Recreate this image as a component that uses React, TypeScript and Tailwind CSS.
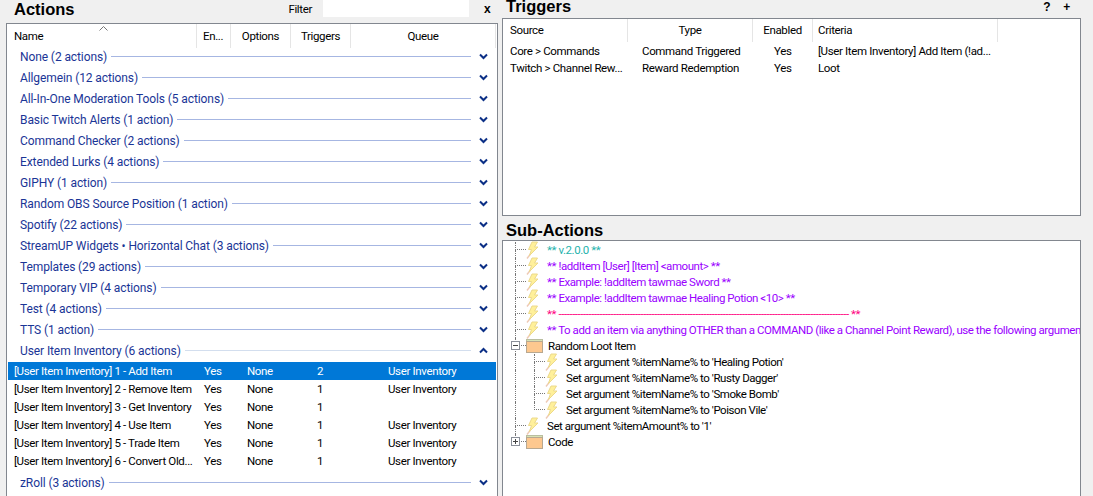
const groupsTop = [
  'None (2 actions)',
  'Allgemein (12 actions)',
  'All-In-One Moderation Tools (5 actions)',
  'Basic Twitch Alerts (1 action)',
  'Command Checker (2 actions)',
  'Extended Lurks (4 actions)',
  'GIPHY (1 action)',
  'Random OBS Source Position (1 action)',
  'Spotify (22 actions)',
  'StreamUP Widgets • Horizontal Chat (3 actions)',
  'Templates (29 actions)',
  'Temporary VIP (4 actions)',
  'Test (4 actions)',
  'TTS (1 action)',
]

const actions = [
  { name: '[User Item Inventory] 1 - Add Item', triggers: '2', queue: 'User Inventory', selected: true },
  { name: '[User Item Inventory] 2 - Remove Item', triggers: '1', queue: 'User Inventory' },
  { name: '[User Item Inventory] 3 - Get Inventory', triggers: '1', queue: '' },
  { name: '[User Item Inventory] 4 - Use Item', triggers: '1', queue: 'User Inventory' },
  { name: '[User Item Inventory] 5 - Trade Item', triggers: '1', queue: 'User Inventory' },
  { name: '[User Item Inventory] 6 - Convert Old...', triggers: '1', queue: 'User Inventory' },
]

const subActions = [
  { text: '** v.2.0.0 **', color: 'text-[#1fb3ad]' },
  { text: '** !addItem [User] [Item] <amount> **', color: 'text-[#9a00ff]' },
  { text: '** Example: !addItem tawmae Sword **', color: 'text-[#9a00ff]' },
  { text: '** Example: !addItem tawmae Healing Potion <10> **', color: 'text-[#9a00ff]' },
  { text: '** ' + '-'.repeat(106) + ' **', color: 'text-[#ff0080]' },
  {
    text: '** To add an item via anything OTHER  than a COMMAND (like a Channel Point Reward), use the following argument **',
    color: 'text-[#9a00ff]',
  },
]

const lootItems = ['Healing Potion', 'Rusty Dagger', 'Smoke Bomb', 'Poison Vile']

function Chevron({ up }: { up?: boolean }) {
  return (
    <svg width="9" height="7" viewBox="0 0 9 7" className="shrink-0">
      <polyline
        points={up ? '1,5.5 4.5,2 8,5.5' : '1,1.5 4.5,5 8,1.5'}
        fill="none"
        stroke="#0b2f86"
        strokeWidth="2"
      />
    </svg>
  )
}

function GroupRow({ label, open }: { label: string; open?: boolean }) {
  return (
    <div className="flex h-[21px] items-center pl-[13px] pr-[9px]">
      <span className="whitespace-nowrap text-[12px] tracking-[-0.1px] text-[#1a3596]">{label}</span>
      <div className={`ml-[4px] h-px flex-1 ${open ? 'bg-[#d3deee]' : 'bg-[#a6b6e2]'}`} />
      <div className="flex w-[17px] justify-end">
        <Chevron up={open} />
      </div>
    </div>
  )
}

function Bolt() {
  return (
    <svg width="13" height="18" viewBox="0 0 13 18" className="shrink-0">
      <path d="M4.5 13 L1 17.5" stroke="#eec9b4" strokeWidth="1.4" />
      <path d="M6 1 H11.5 L8.5 6 H12 L3.5 14.5 L5.5 8.5 H2.5 Z" fill="#fff09a" stroke="#ecd98c" strokeWidth="1" />
    </svg>
  )
}

function Folder() {
  return (
    <svg width="17" height="14" viewBox="0 0 17 14" className="shrink-0">
      <rect x="0.5" y="0.5" width="16" height="2" fill="#d8e2b4" stroke="#b9bea0" />
      <rect x="0.5" y="2.5" width="16" height="11" fill="#fdc88f" stroke="#b8a890" />
    </svg>
  )
}

function Expander({ open }: { open?: boolean }) {
  return (
    <span className="absolute left-[-4px] top-[3px] flex h-[9px] w-[9px] items-center justify-center border border-[#8a8f99] bg-white">
      <span className="relative h-px w-[5px] bg-[#444]">
        {!open && <span className="absolute left-[2px] top-[-2px] h-[5px] w-px bg-[#444]" />}
      </span>
    </span>
  )
}

// tree connector: vertical dotted stem plus a dotted branch at mid height
function Branch({ last, children }: { last?: boolean; children?: React.ReactNode }) {
  return (
    <div className="relative flex h-full w-[11px] shrink-0 flex-col">
      <div className="h-[8px] border-b border-l border-dotted border-[#777]" />
      {!last && <div className="h-[8px] border-l border-dotted border-[#777]" />}
      {children}
    </div>
  )
}

function Stem({ width }: { width: string }) {
  return <div className={`h-full shrink-0 border-l border-dotted border-[#777] ${width}`} />
}

function Title({ children }: { children: string }) {
  return (
    <h2 className="font-['Liberation_Sans',Arial,sans-serif] text-[16.5px] leading-[18px] font-bold tracking-normal text-black">
      {children}
    </h2>
  )
}

export default function App() {
  return (
    <div className="flex h-[496px] w-[1093px] overflow-hidden bg-[#f0f0f0] font-['Roboto','Open_Sans',sans-serif] text-[11.5px] tracking-[-0.35px] text-black">
      {/* Actions */}
      <div className="flex w-[502px] shrink-0 flex-col pl-[6px] pr-[4px]">
        <div className="flex h-[23px] shrink-0 items-start pl-[8px]">
          <div className="flex-1">
            <Title>Actions</Title>
          </div>
          <span className="mr-[11px] mt-[1px] leading-[16px]">Filter</span>
          <div className="h-[17px] w-[146px] bg-white" />
          <span className="ml-[15px] mt-[1px] w-[14px] font-['Liberation_Sans',sans-serif] text-[12px] font-bold leading-[16px]">x</span>
        </div>
        <div className="min-h-0 flex-1 border border-b-0 border-[#82878f] bg-white">
          <div className="relative grid h-[22px] grid-cols-[190px_34px_60px_60px_145px] items-start">
            <span className="border-r border-[#e5e5e5] pl-[7px] leading-[24px]">Name</span>
            <span className="border-r border-[#e5e5e5] pl-[6px] leading-[24px]">En...</span>
            <span className="border-r border-[#e5e5e5] text-center leading-[24px]">Options</span>
            <span className="border-r border-[#e5e5e5] text-center leading-[24px]">Triggers</span>
            <span className="border-r border-[#e5e5e5] text-center leading-[24px]">Queue</span>
            <svg width="9" height="5" viewBox="0 0 9 5" className="absolute left-[92px] top-[2px]">
              <polyline points="0.5,4.5 4.5,0.5 8.5,4.5" fill="none" stroke="#777" />
            </svg>
          </div>
          {groupsTop.map((g) => (
            <GroupRow key={g} label={g} />
          ))}
          <GroupRow label="User Item Inventory (6 actions)" open />
          <div className="mt-px">
            {actions.map((a) => (
              <div
                key={a.name}
                className={`mx-px grid h-[18px] grid-cols-[190px_43px_70px_71px_1fr] items-center whitespace-nowrap pl-[6px] pt-px ${
                  a.selected ? 'bg-[#0078d7] text-white' : ''
                }`}
              >
                <span>{a.name}</span>
                <span>Yes</span>
                <span>None</span>
                <span>{a.triggers}</span>
                <span>{a.queue}</span>
              </div>
            ))}
          </div>
          <div className="mt-[2px]">
            <GroupRow label="zRoll (3 actions)" />
          </div>
        </div>
      </div>

      {/* Triggers + Sub-Actions */}
      <div className="flex w-[579px] shrink-0 flex-col">
        <div className="flex h-[18px] shrink-0 items-start justify-between pl-[4px] pr-[11px]">
          <div className="mt-[-3px]">
            <Title>Triggers</Title>
          </div>
          <div className="mt-px flex gap-[13px] font-['Liberation_Sans',sans-serif] text-[12px] font-bold leading-[13px]">
            <span>?</span>
            <span>+</span>
          </div>
        </div>
        <div className="h-[198px] shrink-0 border border-[#82878f] bg-white">
          <div className="grid h-[24px] grid-cols-[125px_125px_60px_185px] items-start">
            <span className="border-r border-[#e5e5e5] pl-[7px] leading-[23px]">Source</span>
            <span className="border-r border-[#e5e5e5] text-center leading-[23px]">Type</span>
            <span className="border-r border-[#e5e5e5] text-center leading-[23px]">Enabled</span>
            <span className="border-r border-[#e5e5e5] pl-[5px] leading-[23px]">Criteria</span>
          </div>
          <div className="grid h-[17px] grid-cols-[132px_132px_44px_1fr] items-center whitespace-nowrap pl-[7px]">
            <span>Core &gt; Commands</span>
            <span>Command Triggered</span>
            <span>Yes</span>
            <span>[User Item Inventory] Add Item (!ad...</span>
          </div>
          <div className="grid h-[17px] grid-cols-[132px_132px_44px_1fr] items-center whitespace-nowrap pl-[7px]">
            <span>Twitch &gt; Channel Rew...</span>
            <span>Reward Redemption</span>
            <span>Yes</span>
            <span>Loot</span>
          </div>
        </div>
        <div className="flex h-[24px] shrink-0 items-end pb-px pl-[4px]">
          <Title>Sub-Actions</Title>
        </div>
        <div className="min-h-0 flex-1 overflow-hidden border border-b-0 border-[#82878f] bg-white pl-[12px] pt-[1px] tracking-[-0.44px]">
          {subActions.map((s) => (
            <div key={s.text} className="flex h-[16px] items-center whitespace-nowrap">
              <Branch />
              <Bolt />
              <span className={`ml-[8px] mt-px ${s.color}`}>{s.text}</span>
            </div>
          ))}
          <div className="flex h-[16px] items-center whitespace-nowrap">
            <Branch>
              <Expander open />
            </Branch>
            <Folder />
            <span className="ml-[5px] mt-px">Random Loot Item</span>
          </div>
          {lootItems.map((item, i) => (
            <div key={item} className="flex h-[16px] items-center whitespace-nowrap">
              <Stem width="w-[19px]" />
              <Branch last={i === lootItems.length - 1} />
              <Bolt />
              <span className="ml-[8px] mt-px">Set argument %itemName% to '{item}'</span>
            </div>
          ))}
          <div className="flex h-[16px] items-center whitespace-nowrap">
            <Branch />
            <Bolt />
            <span className="ml-[8px] mt-px">Set argument %itemAmount% to '1'</span>
          </div>
          <div className="flex h-[16px] items-center whitespace-nowrap">
            <Branch last>
              <Expander />
            </Branch>
            <Folder />
            <span className="ml-[5px] mt-px">Code</span>
          </div>
        </div>
      </div>
    </div>
  )
}
